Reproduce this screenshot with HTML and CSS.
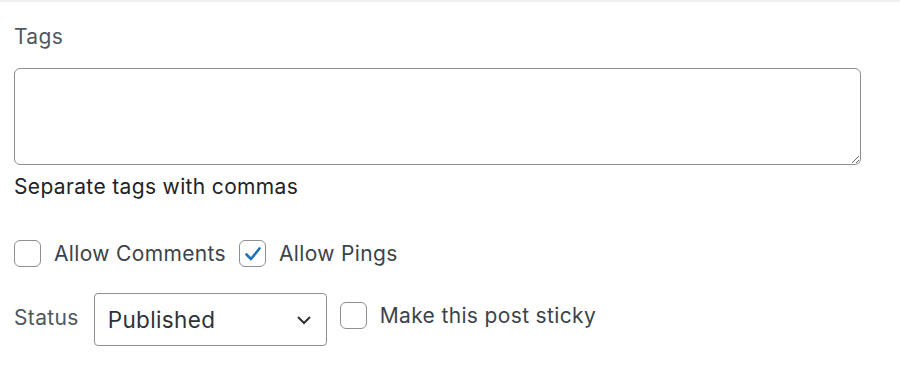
FILE: index.html
```html
<!DOCTYPE html>
<html lang="en">
<head>
    <meta charset="UTF-8">
    <meta name="viewport" content="width=device-width, initial-scale=1.0">
    <title>Quick Edit</title>
    <link rel="stylesheet" href="styles.css">
</head>
<body>
    <div class="panel">
        <!-- Tagi -->
        <label class="field-label" for="tags">Tags</label>
        <textarea id="tags" class="tags-input"></textarea>
        <p class="hint">Separate tags with commas</p>

        <!-- Komentarze i pingi -->
        <div class="row checks">
            <label class="check">
                <span class="box"></span>
                <span>Allow Comments</span>
            </label>
            <label class="check">
                <span class="box checked">
                    <svg viewBox="0 0 20 20" width="20" height="20"><path d="M3.5 10.5 L8 15 L16.5 4.5" fill="none" stroke="#2271b1" stroke-width="2.6" stroke-linecap="round" stroke-linejoin="round"/></svg>
                </span>
                <span>Allow Pings</span>
            </label>
        </div>

        <!-- Status -->
        <div class="row status-row">
            <span class="status-label">Status</span>
            <div class="select">
                <span>Published</span>
                <svg viewBox="0 0 20 20" width="20" height="20"><path d="M4 7 L10 13 L16 7" fill="none" stroke="#2c3338" stroke-width="2"/></svg>
            </div>
            <label class="check">
                <span class="box"></span>
                <span>Make this post sticky</span>
            </label>
        </div>
    </div>
</body>
</html>
```

FILE: styles.css
```css
/* Ustawienia ogólne */
body {
    margin: 0;
    padding: 0;
    background-color: #fff;
    font-family: Inter, "Liberation Sans", Arial, sans-serif;
    color: #1d2327;
    letter-spacing: 0.35px;
}

.panel {
    border-top: 2px solid #f0f0f0;
    padding: 22px 40px 0 14px;
}

.field-label {
    display: block;
    font-size: 21px;
    line-height: 26px;
    color: #50575e;
}

.tags-input {
    display: block;
    box-sizing: border-box;
    width: 847px;
    height: 97px;
    margin-top: 18px;
    border: 1.5px solid #8c8f94;
    border-radius: 6px;
    font-family: inherit;
    font-size: 20px;
}

.hint {
    margin: 8px 0 0;
    font-size: 21px;
    line-height: 28px;
}

.row {
    display: flex;
    align-items: center;
}

.checks {
    margin-top: 39px;
    gap: 13px;
}

.check {
    display: flex;
    align-items: center;
    gap: 13px;
    font-size: 21px;
    color: #3c434a;
}

.box {
    box-sizing: border-box;
    width: 27px;
    height: 27px;
    border: 1.5px solid #8c8f94;
    border-radius: 6px;
    display: flex;
    align-items: center;
    justify-content: center;
}

.status-row {
    margin-top: 26px;
}

.status-label {
    font-size: 21px;
    color: #50575e;
    margin-right: 15px;
    position: relative;
    top: -2px;
}

.select {
    box-sizing: border-box;
    width: 233px;
    height: 53px;
    border: 1.5px solid #8c8f94;
    border-radius: 4px;
    display: flex;
    align-items: center;
    justify-content: space-between;
    padding: 0 12px 0 13px;
    font-size: 22.5px;
    color: #2c3338;
    margin-right: 13px;
}

.status-row .check {
    position: relative;
    top: -4px;
}
```
